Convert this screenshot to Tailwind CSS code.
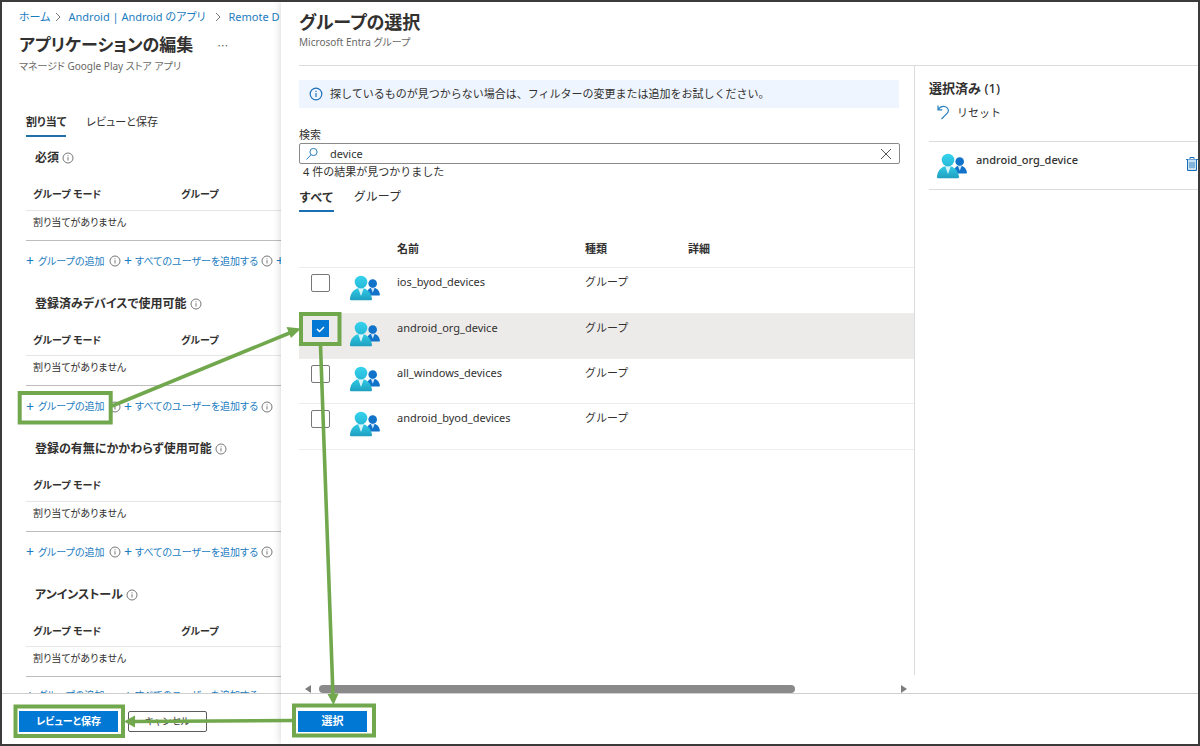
<!DOCTYPE html>
<html lang="ja">
<head>
<meta charset="utf-8">
<title>グループの選択</title>
<script src="https://cdn.jsdelivr.net/npm/@tailwindcss/browser@4"></script>
</head>
<body class="bg-white">
<svg class="absolute size-0" aria-hidden="true">
  <defs>
    <linearGradient id="cyan" x1="0" y1="0" x2="0" y2="1"><stop offset="0" stop-color="#2fcbe6"/><stop offset="1" stop-color="#1f9fc0"/></linearGradient>
    <linearGradient id="head" x1="0" y1="0" x2="0" y2="1"><stop offset="0" stop-color="#35d3ee"/><stop offset="1" stop-color="#27b9d8"/></linearGradient>
  </defs>
  <symbol id="group" viewBox="0 0 30 26">
    <path d="M17 20.500c-.3-4 1.500-8 5.500-8s7 3 7.400 6.800c.1.800-.4 1.200-1.100 1.200z" fill="#1072c8"/>
    <path d="M20.800 12.800l2 5 1.900-5z" fill="#cfe6fa"/>
    <circle cx="22.700" cy="8.500" r="4.300" fill="#1072c8"/>
    <path d="M1.300 25.200c-.9 0-1.400-.6-1.300-1.500C.6 18 4 13 10.800 13s10.400 5 11.200 10.700c.1.900-.5 1.500-1.400 1.500z" fill="url(#cyan)"/>
    <path d="M8.200 13.300l2.800 7.700 2.800-7.700z" fill="#d8f4fa"/>
    <circle cx="11" cy="7" r="6.300" fill="url(#head)"/>
  </symbol>
  <symbol id="info" viewBox="0 0 12 12">
    <circle cx="6" cy="6" r="5" fill="none" stroke="currentColor" stroke-width="1"/>
    <path d="M6 5.200v3.300M6 3.300v1" stroke="currentColor" stroke-width="1"/>
  </symbol>
  <symbol id="chevron" viewBox="0 0 6 10"><path d="M1 1l4 4-4 4" fill="none" stroke="currentColor"/></symbol>
</svg>

<div class="relative flex h-screen overflow-hidden border-2 border-[#3b3b3b] bg-white font-['Noto_Sans','Noto_Sans_CJK_JP',sans-serif] text-[#323130]">

  <!-- Application blade -->
  <section class="flex w-[279px] shrink-0 flex-col overflow-hidden whitespace-nowrap [font-feature-settings:'palt']">
    <div class="min-h-0 flex-1 overflow-hidden">
      <nav class="flex h-[30px] items-center gap-[5px] pl-[17px] text-[11px] text-[#1b7cc0]" aria-label="階層リンク">
        <a href="#">ホーム</a>
        <svg class="mr-0.5 h-2.5 w-1.5 shrink-0 text-[#777]"><use href="#chevron"/></svg>
        <a href="#" class="w-[142px] shrink-0">Android | Android のアプリ</a>
        <svg class="mr-0.5 h-2.5 w-1.5 shrink-0 text-[#777]"><use href="#chevron"/></svg>
        <a href="#">Remote D</a>
      </nav>
      <div class="flex h-[26px] items-center pl-[17px]">
        <h1 class="text-[17px] font-bold">アプリケーションの編集</h1>
        <button type="button" class="ml-6 pt-0.5 text-[11px] text-[#666]" aria-label="その他">⋯</button>
      </div>
      <p class="h-4 pl-[17px] text-[10px] leading-4 text-[#6a6967]">マネージド Google Play ストア アプリ</p>
      <div class="mt-9 flex h-[27px] gap-5 pl-6 text-[11px]" role="tablist">
        <button type="button" role="tab" aria-selected="true" class="border-b-2 border-[#1f6fa8] font-bold">割り当て</button>
        <button type="button" role="tab" class="pb-0.5">レビューと保存</button>
      </div>

      <div class="mt-[5px] mb-1.5">
        <h2 class="flex h-[30px] items-center gap-[3px] pt-0.5 pl-[33px] text-xs font-bold">必須 <svg class="size-3 text-[#777]"><use href="#info"/></svg></h2>
        <table class="mt-1.5 ml-6 w-[400px] table-fixed text-[10px]">
          <thead><tr class="h-8 border-b border-[#e6e6e6] text-left"><th class="w-[148px] pt-0.5 pl-[7px]">グループ モード</th><th class="pt-0.5 pl-[7px]">グループ</th></tr></thead>
          <tbody><tr class="h-[30px] border-b border-[#bdbdbd]"><td colspan="2" class="pb-1.5 pl-[7px]">割り当てがありません</td></tr></tbody>
        </table>
        <div class="ml-6 flex h-[41px] items-center gap-[3px] text-[10px] text-[#1b7cc0]">
          <a href="#" class="flex w-20 shrink-0 items-center gap-1"><span class="text-sm leading-4">+</span>グループの追加</a><svg class="size-3 shrink-0 text-[#777]"><use href="#info"/></svg>
          <a href="#" class="flex w-[134px] shrink-0 items-center gap-[3px]"><span class="text-sm leading-4">+</span>すべてのユーザーを追加する</a><svg class="size-3 shrink-0 text-[#777]"><use href="#info"/></svg>
          <a href="#" aria-label="追加" class="shrink-0 text-sm leading-4">+</a>
        </div>
      </div>

      <div class="mb-1.5">
        <h2 class="flex h-[30px] items-center gap-[3px] pt-0.5 pl-[33px] text-xs font-bold">登録済みデバイスで使用可能 <svg class="size-3 text-[#777]"><use href="#info"/></svg></h2>
        <table class="mt-1.5 ml-6 w-[400px] table-fixed text-[10px]">
          <thead><tr class="h-8 border-b border-[#e6e6e6] text-left"><th class="w-[148px] pt-0.5 pl-[7px]">グループ モード</th><th class="pt-0.5 pl-[7px]">グループ</th></tr></thead>
          <tbody><tr class="h-[30px] border-b border-[#bdbdbd]"><td colspan="2" class="pb-1.5 pl-[7px]">割り当てがありません</td></tr></tbody>
        </table>
        <div class="ml-6 flex h-[41px] items-center gap-[3px] text-[10px] text-[#1b7cc0]">
          <a href="#" class="flex w-20 shrink-0 items-center gap-1"><span class="text-sm leading-4">+</span>グループの追加</a><svg class="size-3 shrink-0 text-[#777]"><use href="#info"/></svg>
          <a href="#" class="flex w-[134px] shrink-0 items-center gap-[3px]"><span class="text-sm leading-4">+</span>すべてのユーザーを追加する</a><svg class="size-3 shrink-0 text-[#777]"><use href="#info"/></svg>
        </div>
      </div>

      <div class="mb-1.5">
        <h2 class="flex h-[30px] items-center gap-[3px] pt-0.5 pl-[33px] text-xs font-bold">登録の有無にかかわらず使用可能 <svg class="size-3 text-[#777]"><use href="#info"/></svg></h2>
        <table class="mt-1.5 ml-6 w-[400px] table-fixed text-[10px]">
          <thead><tr class="h-8 border-b border-[#e6e6e6] text-left"><th class="pt-0.5 pl-[7px]">グループ モード</th></tr></thead>
          <tbody><tr class="h-[30px] border-b border-[#bdbdbd]"><td class="pb-1.5 pl-[7px]">割り当てがありません</td></tr></tbody>
        </table>
        <div class="ml-6 flex h-[41px] items-center gap-[3px] text-[10px] text-[#1b7cc0]">
          <a href="#" class="flex w-20 shrink-0 items-center gap-1"><span class="text-sm leading-4">+</span>グループの追加</a><svg class="size-3 shrink-0 text-[#777]"><use href="#info"/></svg>
          <a href="#" class="flex w-[134px] shrink-0 items-center gap-[3px]"><span class="text-sm leading-4">+</span>すべてのユーザーを追加する</a><svg class="size-3 shrink-0 text-[#777]"><use href="#info"/></svg>
        </div>
      </div>

      <div>
        <h2 class="flex h-[30px] items-center gap-[3px] pt-0.5 pl-[33px] text-xs font-bold">アンインストール <svg class="size-3 text-[#777]"><use href="#info"/></svg></h2>
        <table class="mt-1.5 ml-6 w-[400px] table-fixed text-[10px]">
          <thead><tr class="h-8 border-b border-[#e6e6e6] text-left"><th class="w-[148px] pt-0.5 pl-[7px]">グループ モード</th><th class="pt-0.5 pl-[7px]">グループ</th></tr></thead>
          <tbody><tr class="h-[30px] border-b border-[#bdbdbd]"><td colspan="2" class="pb-1.5 pl-[7px]">割り当てがありません</td></tr></tbody>
        </table>
        <div class="ml-6 flex h-[37px] items-center gap-[18px] text-[10px] text-[#1b7cc0]">
          <a href="#" class="flex w-20 shrink-0 items-center gap-1"><span class="text-sm leading-4">+</span>グループの追加</a>
          <a href="#" class="flex w-[134px] shrink-0 items-center gap-[3px]"><span class="text-sm leading-4">+</span>すべてのユーザーを追加する</a>
        </div>
      </div>
    </div>
    <footer class="flex h-[51px] shrink-0 items-start gap-2.5 border-t border-[#cfcfcf] pt-[17px] pl-[17px] text-[10px]">
      <button type="button" class="h-[21px] w-[99px] bg-[#0078d4] font-bold text-white">レビューと保存</button>
      <button type="button" class="h-[21px] w-[79px] rounded-xs border border-[#5c5c5c] bg-white">キャンセル</button>
    </footer>
  </section>

  <!-- Group picker blade -->
  <section class="flex min-w-0 flex-1 flex-col bg-white shadow-[0_0_8px_rgba(0,0,0,0.18)]">
    <header class="ml-[18px] h-16 border-b border-[#dcdcdc] pt-1.5 [font-feature-settings:'palt']">
      <h1 class="text-lg leading-7 font-bold">グループの選択</h1>
      <p class="text-[10px] leading-3 text-[#6a6967]">Microsoft Entra グループ</p>
    </header>
    <div class="flex min-h-0 flex-1">
      <main class="flex min-w-0 flex-1 flex-col pl-[18px]">
        <div class="flex min-h-0 flex-1 flex-col border-r border-[#dcdcdc]">
          <div class="mt-3.5 mr-[15px] flex h-7 shrink-0 items-center gap-[7px] bg-[#eff5fe] pl-2.5 text-[11px]">
            <svg class="size-3.5 text-[#1b6fb8]"><use href="#info"/></svg>
            探しているものが見つからない場合は、フィルターの変更または追加をお試しください。
          </div>
          <label for="q" class="mt-[19px] text-[11px] leading-4">検索</label>
          <div class="mr-3.5 flex h-[21px] shrink-0 items-center rounded-xs border border-[#8a8a8a] pr-[7px] pl-[5px]">
            <svg class="size-3.5" viewBox="0 0 14 14" fill="none" stroke="#2b82c2"><circle cx="8.500" cy="5" r="3.600"/><path d="M6 7.800L1.500 12.500"/></svg>
            <input id="q" type="text" value="device" class="ml-[11px] min-w-0 flex-1 text-[11px] leading-4 outline-none">
            <button type="button" aria-label="クリア"><svg class="size-3" viewBox="0 0 12 12" stroke="#555"><path d="M1 1l10 10M11 1L1 11"/></svg></button>
          </div>
          <p class="pl-1 text-[11px] leading-4">4 件の結果が見つかりました</p>
          <div class="mt-1.5 flex h-[26px] shrink-0 gap-5 text-xs" role="tablist">
            <button type="button" role="tab" aria-selected="true" class="border-b-2 border-[#1a6fb4] font-bold">すべて</button>
            <button type="button" role="tab" class="pb-1">グループ</button>
          </div>
          <table class="mt-[17px] w-full table-fixed text-[11px]">
            <thead>
              <tr class="h-[38px] border-b border-[#ededed] text-left">
                <th class="w-[51px]"></th><th class="w-[47px]"></th><th class="w-[188px] pt-0.5">名前</th><th class="w-[103px] pt-0.5">種類</th><th class="pt-0.5">詳細</th>
              </tr>
            </thead>
            <tbody>
              <tr class="h-[46px] border-b border-[#ededed] align-top">
                <td class="pt-1.5 pl-3"><input type="checkbox" aria-label="ios_byod_devices" class="block h-[18px] w-[19px] appearance-none rounded-xs border border-[#777] bg-white"></td>
                <td class="pt-[7px]"><svg class="h-[26px] w-[30px]"><use href="#group"/></svg></td>
                <td class="pt-1.5">ios_byod_devices</td><td class="pt-1.5">グループ</td><td></td>
              </tr>
              <tr class="h-[45px] border-b border-[#ededed] bg-[#edebe9] align-top">
                <td class="pt-1.5 pl-[13px]">
                  <div class="grid size-[17px]">
                    <input type="checkbox" checked aria-label="android_org_device" class="col-start-1 row-start-1 size-[17px] appearance-none bg-[#0078d4]">
                    <svg class="pointer-events-none col-start-1 row-start-1 size-[17px]" viewBox="0 0 17 17" fill="none" stroke="#fff" stroke-width="1.500"><path d="M5 9l2.500 2.500L12 7"/></svg>
                  </div>
                </td>
                <td class="pt-[7px]"><svg class="h-[26px] w-[30px]"><use href="#group"/></svg></td>
                <td class="pt-1.5">android_org_device</td><td class="pt-1.5">グループ</td><td></td>
              </tr>
              <tr class="h-[45px] border-b border-[#ededed] align-top">
                <td class="pt-1.5 pl-3"><input type="checkbox" aria-label="all_windows_devices" class="block h-[18px] w-[19px] appearance-none rounded-xs border border-[#777] bg-white"></td>
                <td class="pt-[7px]"><svg class="h-[26px] w-[30px]"><use href="#group"/></svg></td>
                <td class="pt-1.5">all_windows_devices</td><td class="pt-1.5">グループ</td><td></td>
              </tr>
              <tr class="h-[46px] border-b border-[#ededed] align-top">
                <td class="pt-1.5 pl-3"><input type="checkbox" aria-label="android_byod_devices" class="block h-[18px] w-[19px] appearance-none rounded-xs border border-[#777] bg-white"></td>
                <td class="pt-[7px]"><svg class="h-[26px] w-[30px]"><use href="#group"/></svg></td>
                <td class="pt-1.5">android_byod_devices</td><td class="pt-1.5">グループ</td><td></td>
              </tr>
            </tbody>
          </table>
        </div>
        <div class="flex h-[18px] shrink-0 items-end gap-2 pr-2 pl-1.5">
          <svg class="h-2 w-1.5" viewBox="0 0 6 8"><path d="M6 0v8L0 4z" fill="#7d7d7d"/></svg>
          <div class="h-2 flex-1"><div class="h-2 w-[83%] rounded-full bg-[#8a8a8a]"></div></div>
          <svg class="h-2 w-1.5" viewBox="0 0 6 8"><path d="M0 0v8l6-4z" fill="#7d7d7d"/></svg>
        </div>
      </main>
      <aside class="w-[283px] shrink-0 pl-3.5">
        <h2 class="mt-3 text-[13px] leading-5 font-bold">選択済み <span class="font-medium">(1)</span></h2>
        <button type="button" class="mt-[7px] flex h-4 items-center gap-1 pl-2 text-[11px] leading-4">
          <svg class="size-4" viewBox="0 0 16 16" fill="none" stroke="#2b82c2" stroke-width="1.200"><path d="M1 .5v4.300h4.300M1.200 4.500C3 1.800 6 .8 8.500 1.800c2.900 1.200 3.700 4.200 1.800 6.400L4.500 14"/></svg>
          リセット
        </button>
        <div class="mt-5 flex h-[49px] items-start border-y border-[#dcdcdc] pt-2.5 pl-2">
          <svg class="mt-px h-[26px] w-[30px]"><use href="#group"/></svg>
          <span class="ml-[9px] flex-1 text-[11px] leading-4 font-medium">android_org_device</span>
          <button type="button" aria-label="削除" class="mt-1"><svg class="block h-4 w-3" viewBox="0 0 12 16" fill="none" stroke="#1b6fb8"><path d="M0 3.500h12M4 3V1.500h4V3"/><path d="M1.500 3.500v11h9v-11" fill="#c9e1f5"/><path d="M4 6v6M6 6v6M8 6v6" stroke-width=".8"/></svg></button>
        </div>
      </aside>
    </div>
    <footer class="h-[51px] shrink-0 border-t border-[#cfcfcf] pt-[17px] pl-[17px]">
      <button type="button" class="block h-[21px] w-[69px] bg-[#0078d4] text-[11px] font-bold text-white">選択</button>
    </footer>
  </section>

  <!-- Step markers and arrows laid over the screen -->
  <svg class="pointer-events-none absolute -top-0.5 -left-0.5 h-[746px] w-[1200px]" viewBox="0 0 1200 746" fill="none" stroke="#72a84d" stroke-width="4" aria-hidden="true">
    <rect x="19.700" y="393" width="91" height="29.500"/>
    <rect x="301" y="314" width="38.500" height="30"/>
    <rect x="15.500" y="706.500" width="107.500" height="29.500"/>
    <rect x="294" y="705.500" width="80" height="30"/>
    <path d="M112 406L292 332M320.500 345L333 696M293 720.500L134 721.500" stroke-width="3.600"/>
    <g fill="#72a84d" stroke="none"><path d="M301 328.500l-10 9.500-4.500-11z"/><path d="M333.500 705l-6-11 11-.5z"/><path d="M124 721.500l11-6v12z"/></g>
  </svg>
</div>
</body>
</html>
